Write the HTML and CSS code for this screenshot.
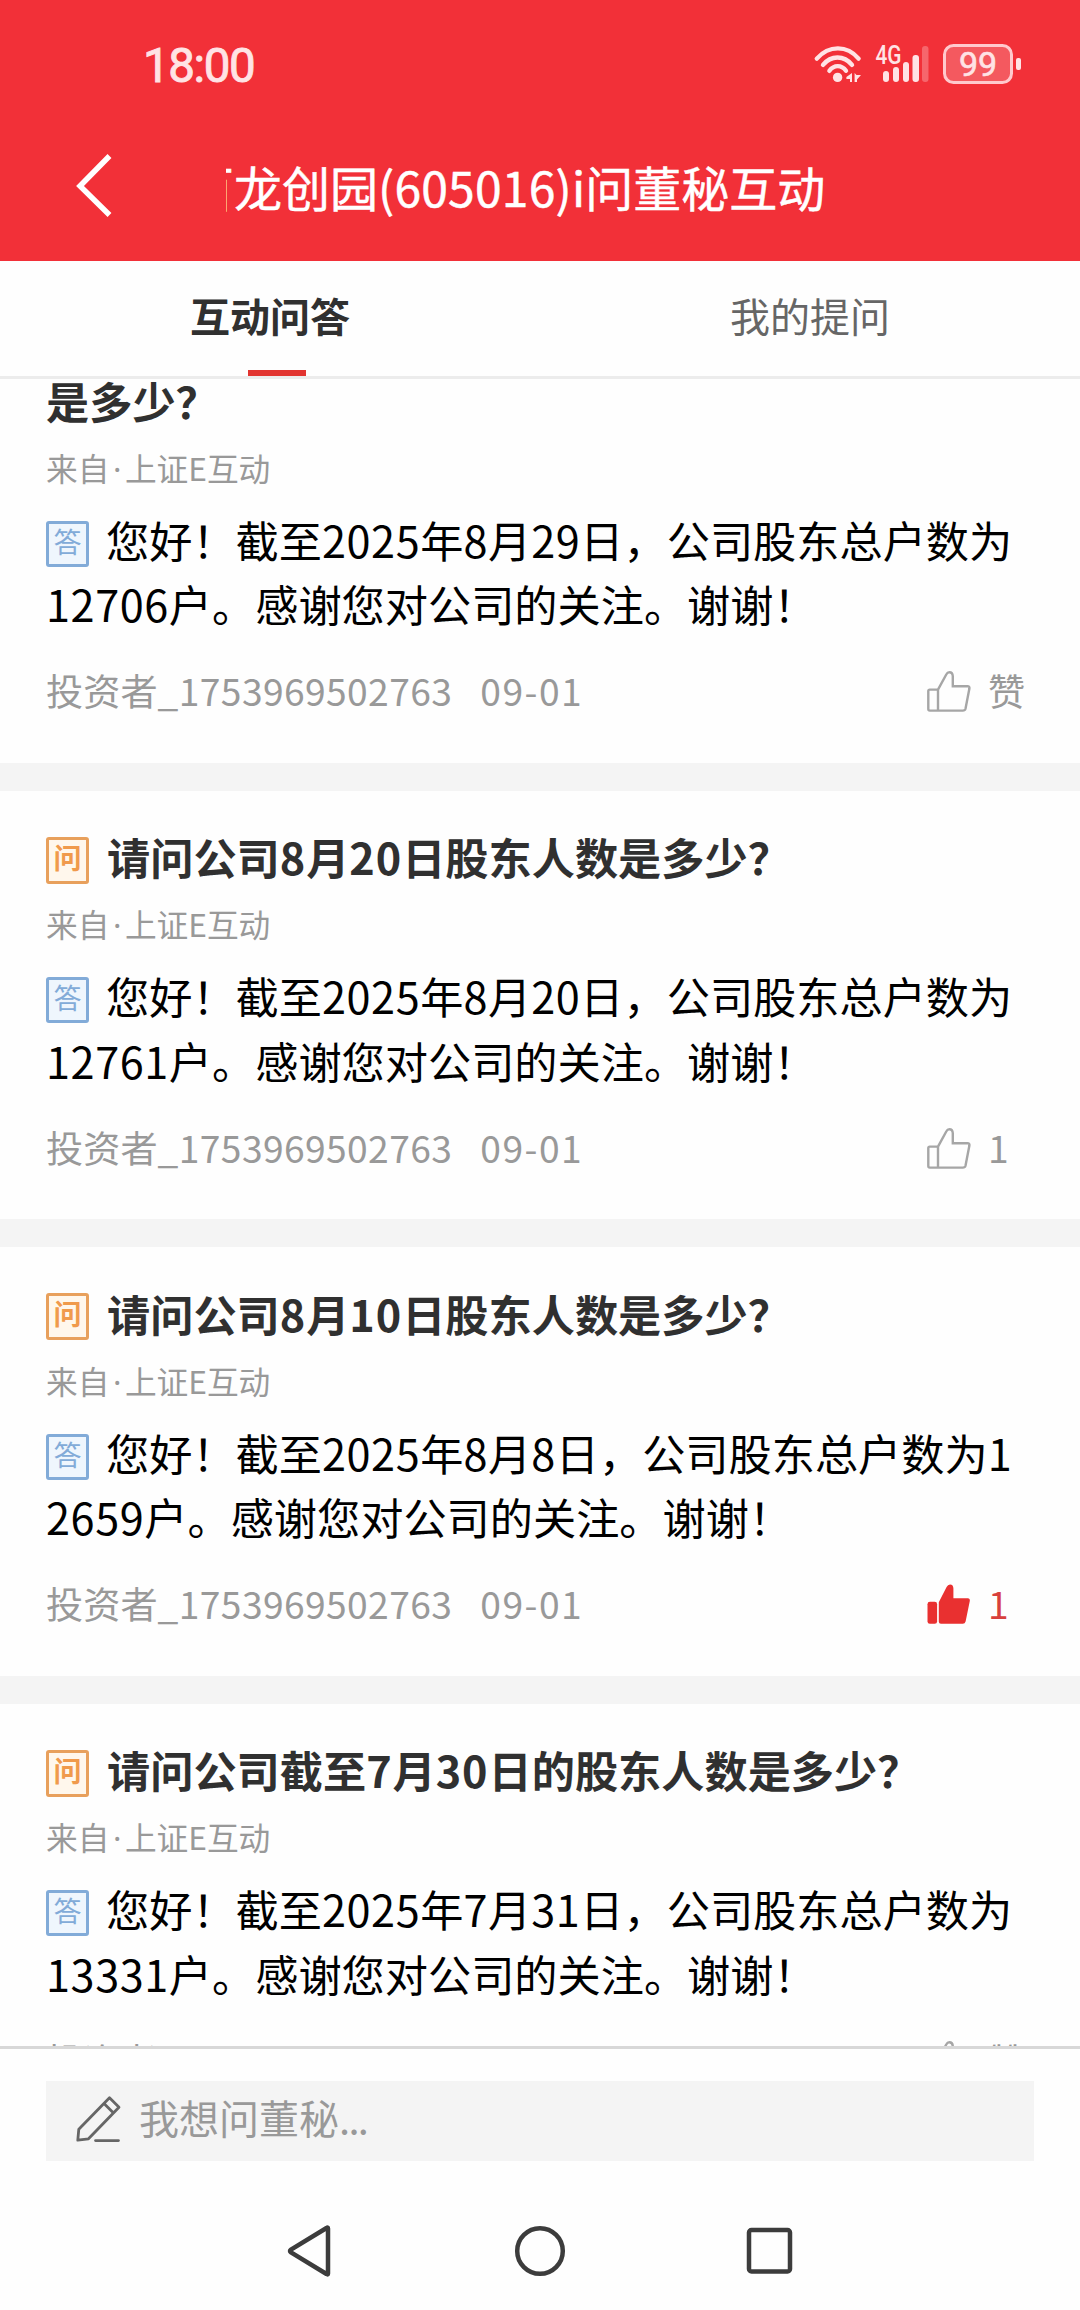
FILE: index.html
```html
<!DOCTYPE html>
<html lang="zh-CN">
<head>
<meta charset="utf-8">
<title>i问董秘互动</title>
<link rel="stylesheet" href="styles.css">
</head>
<body>
<svg class="defs" width="0" height="0" aria-hidden="true">
  <symbol id="thumb" viewBox="0 0 44 42">
    <path d="M11 18.6H2.8Q1.3 18.6 1.3 20V38Q1.3 39.6 2.8 39.6H35.8Q38 39.6 38.5 37.8L42.4 17.6Q42.8 15.2 40.4 15.2H25.8V5.2Q25.6 1.2 22.4 1.2Q20.4 1.2 19.4 3.2L11 18.6V39.6"/>
  </symbol>
  <symbol id="thumb-solid" viewBox="0 0 44 42">
    <rect x=".5" y="17.8" width="9.6" height="22" rx="2.4"/>
    <path d="M11.8 18.2L19.6 3Q20.8.5 23 .5Q26.4.7 26.4 4.6V14.2H40.8Q43.2 14.4 42.8 17L38.6 37.6Q38 39.8 35.8 39.8H14Q11.8 39.8 11.8 37.8Z"/>
  </symbol>
</svg>
<header class="top">
  <div class="status">
    <span class="clock">18:00</span>
    <svg class="sys" width="212" height="44" viewBox="812 42 212 44">
      <g fill="none" stroke="#ffe3e5" stroke-width="4.4" stroke-linecap="round">
        <path d="M816.8 58.6C829 45 847 45 858.6 58.6"/>
        <path d="M823 64.8C831 55 844 55 852 64.8"/>
        <path d="M829.4 70.8C834 64.6 841.5 64.6 846 70.8"/>
      </g>
      <g fill="#ffe3e5">
        <circle cx="837.6" cy="77.4" r="4.7"/>
        <path d="M852 73V82H850V79H846.4V77Z M854.6 73L856.5 75H861L857 79.5V82H854.6Z"/>
        <rect x="883" y="71" width="6" height="11" rx="3"/>
        <rect x="893" y="67" width="6" height="15" rx="3"/>
        <rect x="903" y="62" width="6" height="20" rx="3"/>
        <rect x="912.5" y="55" width="6.5" height="27" rx="3"/>
        <rect x="922" y="46" width="6.5" height="36" rx="3" opacity=".3"/>
        <rect x="1016" y="58" width="5" height="12" rx="2"/>
        <text class="net" x="875.5" y="64" textLength="26" lengthAdjust="spacingAndGlyphs">4G</text>
      </g>
      <rect x="944.5" y="45.5" width="67" height="37" rx="9" fill="#fff" fill-opacity=".2" stroke="#ffc9cd" stroke-width="3"/>
      <text class="level" x="978" y="76" text-anchor="middle" fill="#ffe3e5">99</text>
    </svg>
  </div>
  <div class="titlebar">
    <svg class="back" width="40" height="68" viewBox="0 0 40 68"><path d="M34.5 4L5 34L34.5 63" fill="none" stroke="#fff" stroke-width="5.5"/></svg>
    <h1 class="title"><span>百龙创园<i class="num">(605016)i</i>问董秘互动</span></h1>
  </div>
</header>
<nav class="tabs">
  <div class="tab active">互动问答</div>
  <div class="tab">我的提问</div>
</nav>
<main class="list">
  <article class="card cut">
    <h2 class="q">是多少？</h2>
    <p class="from">来自<i class="dot">·</i>上证E互动</p>
    <p class="a"><b class="badge">答</b>您好！截至<i class="num">2025</i>年<i class="num">8</i>月<i class="num">29</i>日，公司股东总户数为<br><i class="num">12706</i>户。感谢您对公司的关注。谢谢！</p>
    <div class="meta"><span>投资者<i class="num">_1753969502763</i></span><span class="date">09-01</span><span class="like"><svg class="thumb"><use href="#thumb"/></svg>赞</span></div>
  </article>
  <article class="card">
    <h2 class="q"><b class="badge ask">问</b><span>请问公司<i class="num">8</i>月<i class="num">20</i>日股东人数是多少？</span></h2>
    <p class="from">来自<i class="dot">·</i>上证E互动</p>
    <p class="a"><b class="badge">答</b>您好！截至<i class="num">2025</i>年<i class="num">8</i>月<i class="num">20</i>日，公司股东总户数为<br><i class="num">12761</i>户。感谢您对公司的关注。谢谢！</p>
    <div class="meta"><span>投资者<i class="num">_1753969502763</i></span><span class="date">09-01</span><span class="like"><svg class="thumb"><use href="#thumb"/></svg>1</span></div>
  </article>
  <article class="card">
    <h2 class="q"><b class="badge ask">问</b><span>请问公司<i class="num">8</i>月<i class="num">10</i>日股东人数是多少？</span></h2>
    <p class="from">来自<i class="dot">·</i>上证E互动</p>
    <p class="a"><b class="badge">答</b>您好！截至<i class="num">2025</i>年<i class="num">8</i>月<i class="num">8</i>日，公司股东总户数为<i class="num">1</i><br><i class="num">2659</i>户。感谢您对公司的关注。谢谢！</p>
    <div class="meta"><span>投资者<i class="num">_1753969502763</i></span><span class="date">09-01</span><span class="like on"><svg class="thumb"><use href="#thumb-solid"/></svg>1</span></div>
  </article>
  <article class="card">
    <h2 class="q"><b class="badge ask">问</b><span>请问公司截至<i class="num">7</i>月<i class="num">30</i>日的股东人数是多少？</span></h2>
    <p class="from">来自<i class="dot">·</i>上证E互动</p>
    <p class="a"><b class="badge">答</b>您好！截至<i class="num">2025</i>年<i class="num">7</i>月<i class="num">31</i>日，公司股东总户数为<br><i class="num">13331</i>户。感谢您对公司的关注。谢谢！</p>
    <div class="meta"><span>投资者<i class="num">_1753969502763</i></span><span class="date">09-01</span><span class="like"><svg class="thumb"><use href="#thumb"/></svg>赞</span></div>
  </article>
</main>
<footer class="compose">
  <div class="field">
    <svg width="46" height="48" viewBox="0 0 46 48" fill="none" stroke="#666" stroke-width="2.8" stroke-linejoin="round" stroke-linecap="round"><path d="M2.8 45.2L3.8 34.2L34.5 2.8L44 12.2L13.5 43.8Z M29 8.5L38.5 18M20.5 45.6H43.5"/></svg>
    <span>我想问董秘<i class="dots">...</i></span>
  </div>
</footer>
<div class="navkeys">
  <svg width="50" height="54" viewBox="0 0 50 54"><path d="M44 4.5V49.5Q44 51 42.5 50L7 28.5Q5 27 7 25.5L42.5 4Q44 3 44 4.5Z"/></svg>
  <svg width="54" height="54" viewBox="0 0 54 54"><circle cx="27" cy="27" r="22.8"/></svg>
  <svg width="50" height="54" viewBox="0 0 50 54"><rect x="3" y="6" width="41" height="41.5" rx="2.5"/></svg>
</div>
</body>
</html>
```
FILE: styles.css
```css
* { box-sizing: border-box; margin: 0; padding: 0; }
body {
  width: 1080px;
  height: 2310px;
  overflow: hidden;
  display: flex;
  flex-direction: column;
  background: #fefefe;
  color: #000;
  font-family: "Noto Sans CJK SC", sans-serif;
  white-space: nowrap;
}
i { font-style: normal; }
.defs { position: absolute; }

.top { height: 261px; background: #f23038; color: #fff; flex: none; }
.status {
  height: 132px;
  padding: 0 56px 0 143px;
  display: flex;
  align-items: center;
  justify-content: space-between;
}
.clock { font: 400 47.5px/48px Roboto, sans-serif; letter-spacing: -1.4px; color: #ffe3e5; -webkit-text-stroke: .9px #ffe3e5; }
.sys { margin-top: -4px; }
.net { font: 500 25px Roboto, sans-serif; }
.level { font: 400 34px Roboto, sans-serif; stroke: #ffe3e5; stroke-width: .6px; }
.titlebar { display: flex; align-items: center; height: 108px; padding-left: 75px; }
.title {
  width: 628px;
  margin-left: 111px;
  overflow: hidden;
  font-size: 48px;
  font-weight: 400;
  line-height: 72px;
}
.title span { display: block; margin-left: -40px; -webkit-text-stroke: .5px #fff; }
.title .num { letter-spacing: .2px; }

.tabs {
  flex: none;
  height: 118px;
  display: flex;
  border-bottom: 3px solid #ececec;
  font-size: 40px;
  line-height: 108px;
  text-align: center;
  color: #666;
}
.tab { flex: 1; }
.active { color: #303030; font-weight: 700; }
.active::after {
  content: "";
  display: block;
  width: 58px;
  height: 6px;
  margin: 1px 0 0 248px;
  background: #e23430;
}

.list { flex: none; height: 1667px; overflow: hidden; }
.card { padding: 43.3px 46px 51.8px; border-bottom: 28px solid #f4f4f4; }
.cut { padding-top: 0; margin-top: -1.2px; }
.q {
  display: flex;
  height: 44px;
  font-size: 43.2px;
  line-height: 44px;
  color: #303030;
}
.q span { margin-left: 1px; }
.q .num { letter-spacing: .9px; }
.from { margin-top: 28.9px; height: 32px; font-size: 31.7px; line-height: 32px; color: #999; }
.dot { display: inline-block; width: 15.5px; text-align: center; font-family: "Noto Sans", sans-serif; line-height: 30px; }
.a { margin-top: 24px; font-size: 43.2px; line-height: 64.75px; }
.a .num { letter-spacing: .6px; }
.badge {
  display: inline-block;
  vertical-align: top;
  width: 43px;
  height: 46px;
  margin: 14.3px 17px 0 0;
  border: 3px solid #82abd8;
  border-radius: 3px;
  background: #eff6fd;
  color: #82abd8;
  font-size: 28px;
  font-weight: 400;
  line-height: 34px;
  text-align: center;
}
.ask {
  flex: none;
  height: 47px;
  margin-top: 2.7px;
  border-color: #e8a05c;
  background: #fff7ec;
  color: #f09a4c;
  font-weight: 700;
  line-height: 35px;
}
.meta {
  display: flex;
  height: 40px;
  margin-top: 35px;
  font-size: 37.2px;
  line-height: 39px;
  color: #999;
}
.meta .num { letter-spacing: .4px; }
.date { margin-left: 28px; letter-spacing: 1.5px; }
.like { display: flex; width: 107px; margin-left: auto; gap: 17px; }
.thumb { width: 44px; height: 42px; flex: none; fill: none; stroke: #a6a6a6; stroke-width: 2.4; }
.on { color: #d8403c; }
.on .thumb { fill: #e93030; stroke: none; }

.compose { flex: none; height: 115px; border-top: 3px solid #d8d8d8; padding: 32px 46px 0; }
.field {
  display: flex;
  align-items: center;
  height: 80px;
  padding-left: 29px;
  gap: 18px;
  background: #f4f4f4;
  color: #999;
  font-size: 40px;
  line-height: 72px;
}
.field span { margin-top: -8px; }
.dots { letter-spacing: -1.7px; }
.field svg { margin-top: -5px; }

.navkeys { display: flex; justify-content: center; gap: 179px; padding-top: 63px; }
.navkeys svg { fill: none; stroke: #3c3c3c; stroke-width: 4.5; }
```
